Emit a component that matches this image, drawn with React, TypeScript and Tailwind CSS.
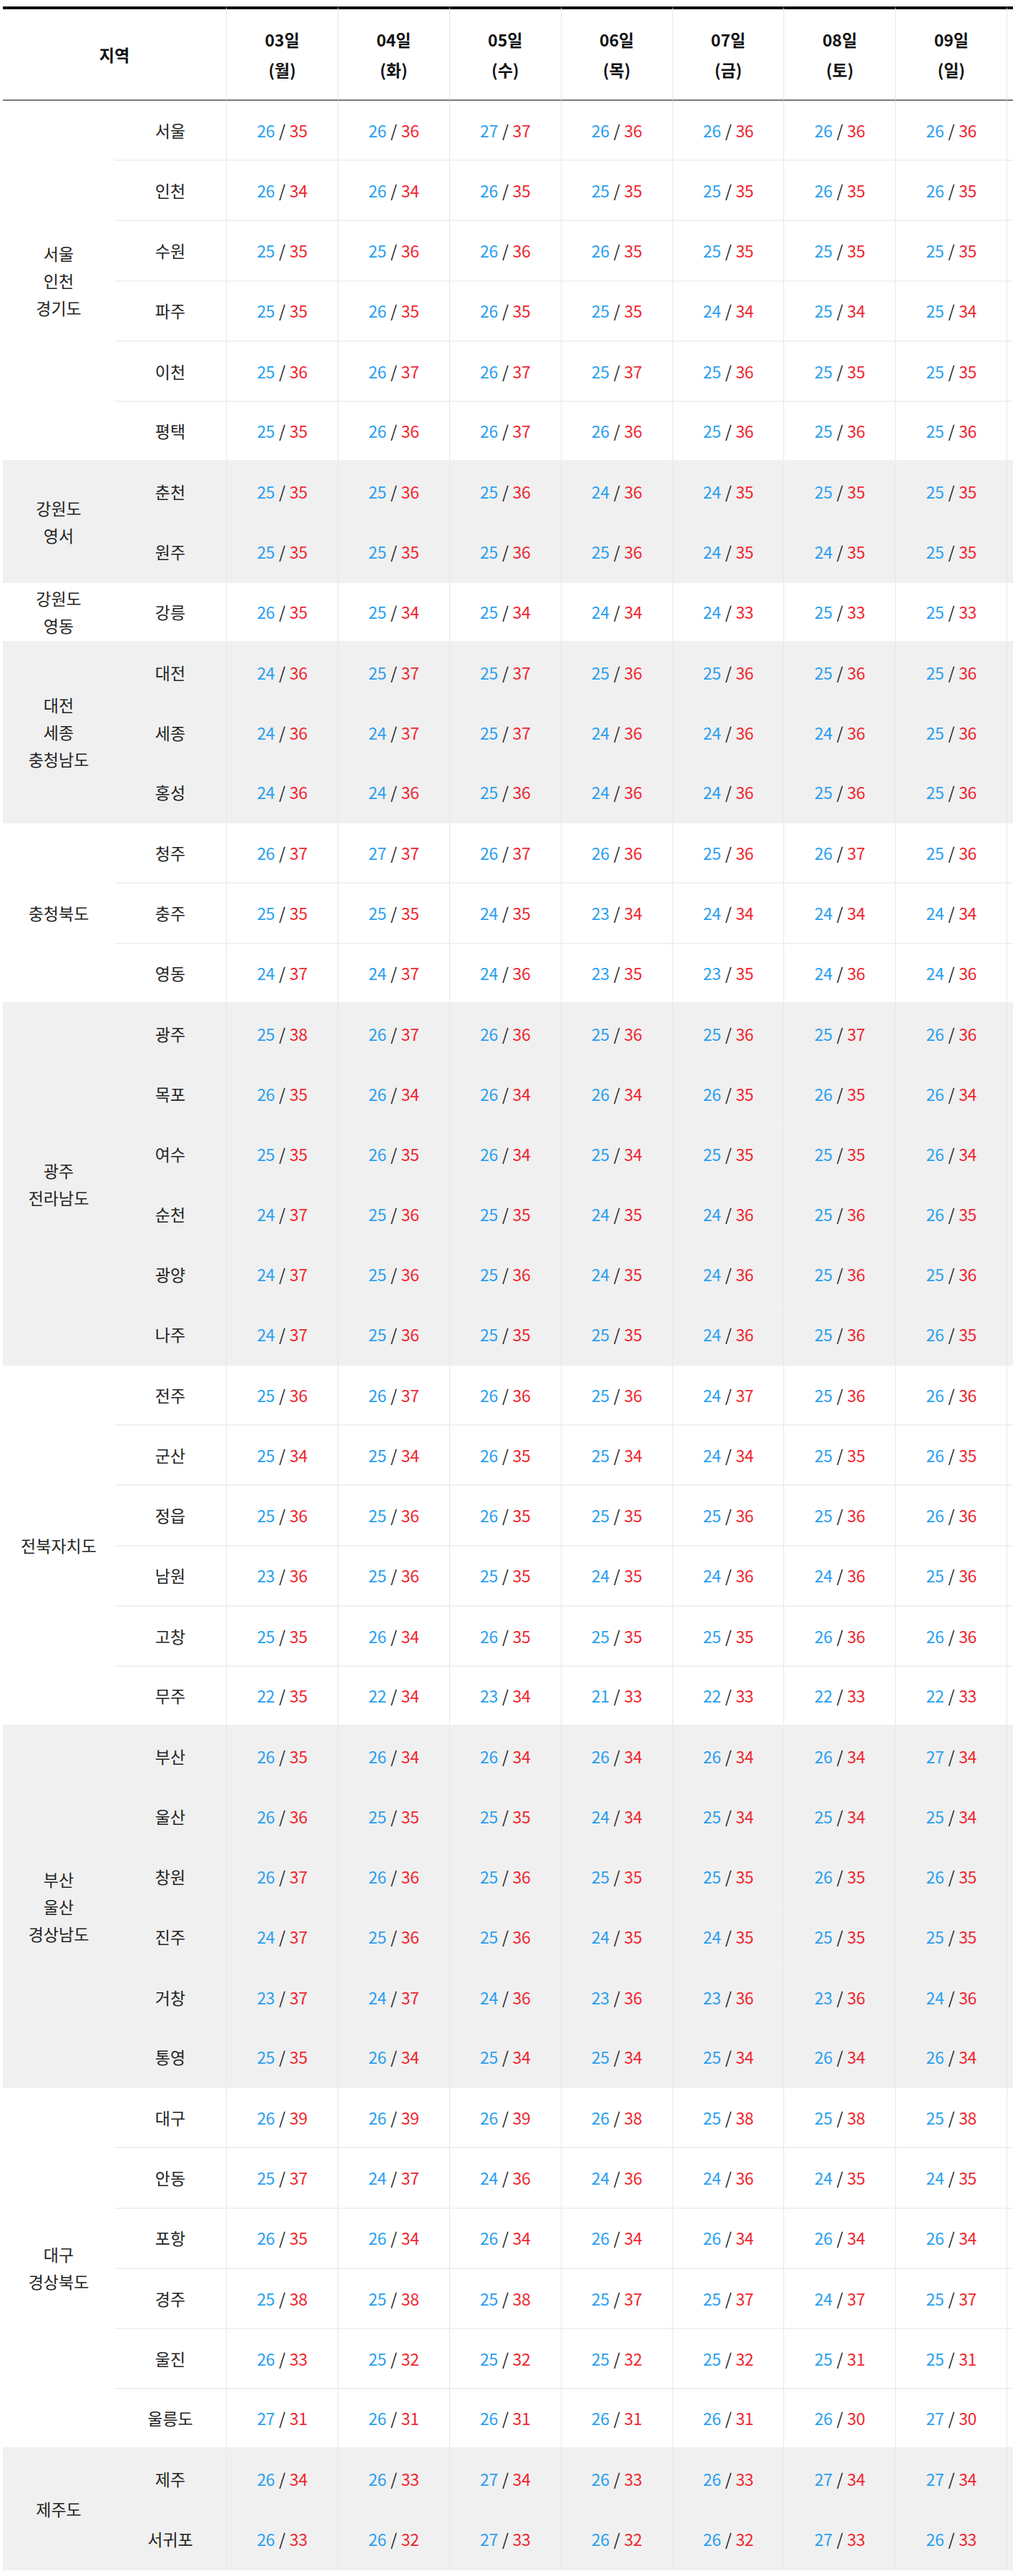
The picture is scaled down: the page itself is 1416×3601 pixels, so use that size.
import React from 'react';

type Group = { label: string[]; gray: boolean; rows: [string, string][] };

const days = [
    { d: '03일', w: '(월)' },
    { d: '04일', w: '(화)' },
    { d: '05일', w: '(수)' },
    { d: '06일', w: '(목)' },
    { d: '07일', w: '(금)' },
    { d: '08일', w: '(토)' },
    { d: '09일', w: '(일)' },
];

const groups: Group[] = [
    {
        label: ['서울', '인천', '경기도'], gray: false, rows: [
            ['서울', '26/35 26/36 27/37 26/36 26/36 26/36 26/36'],
            ['인천', '26/34 26/34 26/35 25/35 25/35 26/35 26/35'],
            ['수원', '25/35 25/36 26/36 26/35 25/35 25/35 25/35'],
            ['파주', '25/35 26/35 26/35 25/35 24/34 25/34 25/34'],
            ['이천', '25/36 26/37 26/37 25/37 25/36 25/35 25/35'],
            ['평택', '25/35 26/36 26/37 26/36 25/36 25/36 25/36'],
        ]
    },
    {
        label: ['강원도', '영서'], gray: true, rows: [
            ['춘천', '25/35 25/36 25/36 24/36 24/35 25/35 25/35'],
            ['원주', '25/35 25/35 25/36 25/36 24/35 24/35 25/35'],
        ]
    },
    {
        label: ['강원도', '영동'], gray: false, rows: [
            ['강릉', '26/35 25/34 25/34 24/34 24/33 25/33 25/33'],
        ]
    },
    {
        label: ['대전', '세종', '충청남도'], gray: true, rows: [
            ['대전', '24/36 25/37 25/37 25/36 25/36 25/36 25/36'],
            ['세종', '24/36 24/37 25/37 24/36 24/36 24/36 25/36'],
            ['홍성', '24/36 24/36 25/36 24/36 24/36 25/36 25/36'],
        ]
    },
    {
        label: ['충청북도'], gray: false, rows: [
            ['청주', '26/37 27/37 26/37 26/36 25/36 26/37 25/36'],
            ['충주', '25/35 25/35 24/35 23/34 24/34 24/34 24/34'],
            ['영동', '24/37 24/37 24/36 23/35 23/35 24/36 24/36'],
        ]
    },
    {
        label: ['광주', '전라남도'], gray: true, rows: [
            ['광주', '25/38 26/37 26/36 25/36 25/36 25/37 26/36'],
            ['목포', '26/35 26/34 26/34 26/34 26/35 26/35 26/34'],
            ['여수', '25/35 26/35 26/34 25/34 25/35 25/35 26/34'],
            ['순천', '24/37 25/36 25/35 24/35 24/36 25/36 26/35'],
            ['광양', '24/37 25/36 25/36 24/35 24/36 25/36 25/36'],
            ['나주', '24/37 25/36 25/35 25/35 24/36 25/36 26/35'],
        ]
    },
    {
        label: ['전북자치도'], gray: false, rows: [
            ['전주', '25/36 26/37 26/36 25/36 24/37 25/36 26/36'],
            ['군산', '25/34 25/34 26/35 25/34 24/34 25/35 26/35'],
            ['정읍', '25/36 25/36 26/35 25/35 25/36 25/36 26/36'],
            ['남원', '23/36 25/36 25/35 24/35 24/36 24/36 25/36'],
            ['고창', '25/35 26/34 26/35 25/35 25/35 26/36 26/36'],
            ['무주', '22/35 22/34 23/34 21/33 22/33 22/33 22/33'],
        ]
    },
    {
        label: ['부산', '울산', '경상남도'], gray: true, rows: [
            ['부산', '26/35 26/34 26/34 26/34 26/34 26/34 27/34'],
            ['울산', '26/36 25/35 25/35 24/34 25/34 25/34 25/34'],
            ['창원', '26/37 26/36 25/36 25/35 25/35 26/35 26/35'],
            ['진주', '24/37 25/36 25/36 24/35 24/35 25/35 25/35'],
            ['거창', '23/37 24/37 24/36 23/36 23/36 23/36 24/36'],
            ['통영', '25/35 26/34 25/34 25/34 25/34 26/34 26/34'],
        ]
    },
    {
        label: ['대구', '경상북도'], gray: false, rows: [
            ['대구', '26/39 26/39 26/39 26/38 25/38 25/38 25/38'],
            ['안동', '25/37 24/37 24/36 24/36 24/36 24/35 24/35'],
            ['포항', '26/35 26/34 26/34 26/34 26/34 26/34 26/34'],
            ['경주', '25/38 25/38 25/38 25/37 25/37 24/37 25/37'],
            ['울진', '26/33 25/32 25/32 25/32 25/32 25/31 25/31'],
            ['울릉도', '27/31 26/31 26/31 26/31 26/31 26/30 27/30'],
        ]
    },
    {
        label: ['제주도'], gray: true, rows: [
            ['제주', '26/34 26/33 27/34 26/33 26/33 27/34 27/34'],
            ['서귀포', '26/33 26/32 27/33 26/32 26/32 27/33 26/33'],
        ]
    },
];

function Temp({ value }: { value: string }) {
    const [lo, hi] = value.split('/');
    return (
        <span className="text-[23px] tracking-[-0.3px]">
            <span className="text-[#2a9ff0]">{lo}</span>
            <span className="text-[#222] mx-[6px]">/</span>
            <span className="text-[#f0262f]">{hi}</span>
        </span>
    );
}

export default function App() {
    return (
        <div className="w-[1416px] overflow-hidden bg-white pl-[4px] pt-[9px] font-['Noto_Sans_CJK_KR','Noto_Sans',sans-serif] text-[#222]">
            <table className="table-fixed border-separate border-spacing-0 w-[1559px]">
                <colgroup>
                    <col className="w-[156px]" />
                    <col className="w-[156px]" />
                    {days.map((d) => <col key={d.d} className="w-[155.9px]" />)}
                    <col className="w-[156px]" />
                </colgroup>
                <thead>
                    <tr className="h-[132px]">
                        <th colSpan={2} className="border-t-4 border-t-[#111] border-b-2 border-b-[#7a7a7a] text-[23px] font-bold text-[#111]">
                            지역
                        </th>
                        {days.map((d) => (
                            <th key={d.d} className="border-t-4 border-t-[#111] border-b-2 border-b-[#7a7a7a] border-l border-l-[#e3e7ee] text-[23px] font-bold leading-[42px] text-[#111]">
                                <div>{d.d}</div>
                                <div>{d.w}</div>
                            </th>
                        ))}
                        <th className="border-t-4 border-t-[#111] border-b-2 border-b-[#7a7a7a] border-l border-l-[#e3e7ee]"></th>
                    </tr>
                </thead>
                <tbody>
                    {groups.map((g) =>
                        g.rows.map(([city, vals], i) => {
                            const last = i === g.rows.length - 1;
                            const bg = g.gray ? 'bg-[#f0f0f0]' : 'bg-white';
                            const rowBorder = last ? 'border-b-[3px] border-b-[#edf0f4]' : 'border-b-2 border-b-[#eef1f5]';
                            return (
                                <tr key={city + i} className={`h-[84.2px] ${bg}`}>
                                    {i === 0 && (
                                        <td rowSpan={g.rows.length} className="border-b-[3px] border-b-[#edf0f4] text-center text-[23px] leading-[38px]">
                                            {g.label.map((l) => <div key={l}>{l}</div>)}
                                        </td>
                                    )}
                                    <td className={`${rowBorder} text-center text-[23px]`}>{city}</td>
                                    {vals.split(' ').map((v, j) => (
                                        <td key={j} className={`${rowBorder} border-l border-l-[#e3e7ee] text-center`}>
                                            <Temp value={v} />
                                        </td>
                                    ))}
                                    <td className={`${rowBorder} border-l border-l-[#e3e7ee]`}></td>
                                </tr>
                            );
                        })
                    )}
                </tbody>
            </table>
        </div>
    );
}
